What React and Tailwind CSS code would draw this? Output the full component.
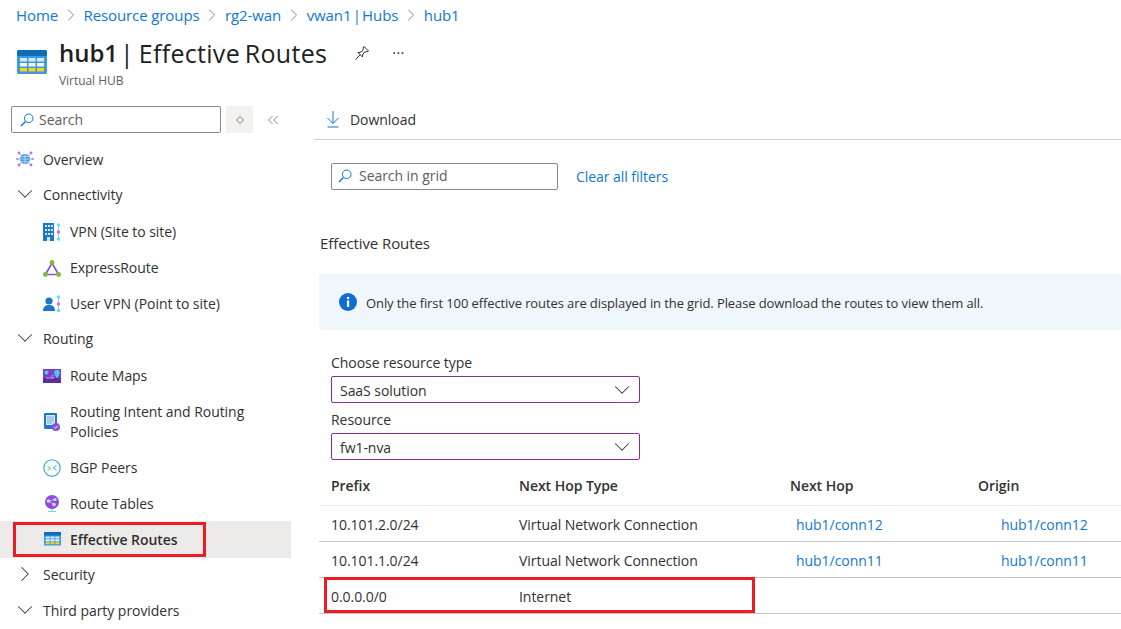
import { ChevronDown, ChevronRight, ChevronsLeft } from 'lucide-react'

const crumbs = ['Home', 'Resource groups', 'rg2-wan', 'vwan1 | Hubs', 'hub1']

function TableIcon({ size = 16 }) {
  return (
    <svg width={size} height={size * 0.8} viewBox="0 0 30 24">
      <rect x="0" y="0" width="30" height="24" rx="1.5" fill="#3b9be0" />
      <rect x="0" y="0" width="30" height="6" rx="1.5" fill="#0f6cbd" />
      <rect x="3" y="8" width="7" height="3.5" fill="#dbe9f6" />
      <rect x="11.5" y="8" width="7" height="3.5" fill="#dbe9f6" />
      <rect x="20" y="8" width="7" height="3.5" fill="#dbe9f6" />
      <rect x="3" y="13" width="7" height="3.5" fill="#f4f4f4" />
      <rect x="11.5" y="13" width="7" height="3.5" fill="#f4f4f4" />
      <rect x="20" y="13" width="7" height="3.5" fill="#f4f4f4" />
      <rect x="3" y="18" width="7" height="3.5" fill="#fcd116" />
      <rect x="11.5" y="18" width="7" height="3.5" fill="#fcd116" />
      <rect x="20" y="18" width="7" height="3.5" fill="#fcd116" />
    </svg>
  )
}

function SearchIcon() {
  return (
    <svg width="14" height="14" viewBox="0 0 14 14" fill="none" stroke="#0f78d4" strokeWidth="1">
      <circle cx="8.7" cy="5.3" r="4.3" />
      <path d="M5.5 8.5 L1 13" strokeWidth="1.4" />
    </svg>
  )
}

function OverviewIcon() {
  return (
    <svg width="18" height="18" viewBox="0 0 18 18">
      <g stroke="#b79ae8" strokeWidth="1">
        <path d="M3 3 L15 15 M15 3 L3 15 M1 9 H17" />
      </g>
      <circle cx="3" cy="3" r="1.4" fill="#a67af4" />
      <circle cx="15" cy="3" r="1.4" fill="#a67af4" />
      <circle cx="3" cy="15" r="1.4" fill="#a67af4" />
      <circle cx="15" cy="15" r="1.4" fill="#a67af4" />
      <circle cx="1.2" cy="9" r="1.1" fill="#a67af4" />
      <circle cx="16.8" cy="9" r="1.1" fill="#a67af4" />
      <circle cx="9" cy="9" r="5" fill="#3b9be0" />
      <path d="M4 9 H14 M9 4 V14 M5 6.5 H13 M5 11.5 H13" stroke="#d5eaf9" strokeWidth="0.7" />
    </svg>
  )
}

function VpnIcon() {
  return (
    <svg width="18" height="18" viewBox="0 0 18 18">
      <rect x="0" y="0" width="11" height="18" fill="#1b78c9" />
      <g fill="#d5e7f6">
        <rect x="2" y="2" width="2" height="2" />
        <rect x="5" y="2" width="2" height="2" />
        <rect x="8" y="2" width="2" height="2" />
        <rect x="2" y="6" width="2" height="2" />
        <rect x="5" y="6" width="2" height="2" />
        <rect x="8" y="6" width="2" height="2" />
        <rect x="2" y="10" width="2" height="2" />
        <rect x="5" y="10" width="2" height="2" />
        <rect x="8" y="10" width="2" height="2" />
        <rect x="4" y="14" width="3" height="4" />
      </g>
      <path d="M15.5 2 V16" stroke="#c6b3ec" strokeWidth="1" />
      <circle cx="15.5" cy="2" r="1.7" fill="#50e6ff" />
      <circle cx="15.5" cy="9" r="1.7" fill="#a67af4" />
      <circle cx="15.5" cy="16" r="1.7" fill="#50e6ff" />
    </svg>
  )
}

function ExpressIcon() {
  return (
    <svg width="18" height="17" viewBox="0 0 18 17">
      <path d="M9 3 L15.5 14.5 H2.5 Z" fill="none" stroke="#8a4fd8" strokeWidth="1.6" />
      <circle cx="9" cy="2.5" r="2.4" fill="#7fba2c" />
      <circle cx="2.4" cy="14.5" r="2.4" fill="#7fba2c" />
      <circle cx="15.6" cy="14.5" r="2.4" fill="#7fba2c" />
    </svg>
  )
}

function UserVpnIcon() {
  return (
    <svg width="18" height="18" viewBox="0 0 18 18">
      <circle cx="6" cy="6" r="3.6" fill="#1b78c9" />
      <path d="M0 16 C0 11 3 10 6 10 C9 10 12 11 12 16 Z" fill="#1b78c9" />
      <path d="M15.5 1 V16" stroke="#c6b3ec" strokeWidth="1" />
      <circle cx="15.5" cy="2" r="1.7" fill="#50e6ff" />
      <circle cx="15.5" cy="9" r="1.7" fill="#a67af4" />
      <circle cx="15.5" cy="15.5" r="1.7" fill="#50e6ff" />
    </svg>
  )
}

function RouteMapsIcon() {
  return (
    <svg width="18" height="14" viewBox="0 0 18 14">
      <rect x="0" y="0" width="18" height="14" fill="#7b3fc8" />
      <rect x="0" y="9" width="18" height="5" fill="#5c2d9e" />
      <circle cx="3.5" cy="3.5" r="2" fill="#50c8f5" />
      <path d="M3 9 H11 M11 9 C8 9 8 6 11 6" fill="none" stroke="#c9b6ee" strokeWidth="0.8" />
      <path d="M14 1 a2.8 2.8 0 0 1 2.8 2.8 c0 2 -2.8 5.5 -2.8 5.5 s-2.8 -3.5 -2.8 -5.5 a2.8 2.8 0 0 1 2.8 -2.8z" fill="#50c8f5" />
    </svg>
  )
}

function IntentIcon() {
  return (
    <svg width="16" height="18" viewBox="0 0 16 18">
      <rect x="0" y="0" width="13" height="16" rx="1" fill="#1b78c9" />
      <rect x="2" y="2" width="9" height="10" fill="#dceaf7" />
      <path d="M3 4 H10 M3 6 H10 M3 8 H10 M3 10 H8" stroke="#5a9bd5" strokeWidth="0.8" />
      <circle cx="12" cy="14" r="4" fill="#8a4fd8" />
      <path d="M10.2 14 L11.5 15.3 L13.8 12.8" fill="none" stroke="#fff" strokeWidth="0.9" />
    </svg>
  )
}

function BgpIcon() {
  return (
    <svg width="18" height="18" viewBox="0 0 18 18" fill="none">
      <circle cx="9" cy="9" r="8.2" stroke="#3b9be0" strokeWidth="1.1" fill="#f4fafe" />
      <path d="M4.5 7.5 L7.8 9.5 L4.5 11.5" stroke="#7fba2c" strokeWidth="0.9" />
      <path d="M13.5 6.5 L10.2 8.8 L13.5 11" stroke="#3b9be0" strokeWidth="0.9" />
    </svg>
  )
}

function RouteTablesIcon() {
  return (
    <svg width="18" height="18" viewBox="0 0 18 18">
      <path d="M9 13 V17 M5 16.5 H13" stroke="#76d3f5" strokeWidth="1" />
      <circle cx="9" cy="7" r="7" fill="#8a4fd8" />
      <circle cx="5.5" cy="6" r="1.8" fill="#ded0f5" />
      <circle cx="12" cy="4.5" r="1.6" fill="#ded0f5" />
      <circle cx="11" cy="9.5" r="1.8" fill="#ded0f5" />
      <path d="M5.5 6 L12 4.5 M5.5 6 L11 9.5" stroke="#ded0f5" strokeWidth="0.7" />
    </svg>
  )
}

function NavItem({ icon, label }) {
  return (
    <div className="flex items-center h-[36px] pt-[2px] pl-[43px]">
      <span className="flex items-center justify-center w-[18px]">{icon}</span>
      <span className="ml-[9px] leading-[20px]">{label}</span>
    </div>
  )
}

function NavGroup({ label, open, bottom }) {
  const Chevron = open ? ChevronDown : ChevronRight
  return (
    <div className={`flex items-center h-[36px] pl-[12px] ${bottom ? 'pb-[4px]' : 'pb-[2px]'}`}>
      <Chevron size={26} strokeWidth={0.95} className="text-[#323130]" />
      <span className="ml-[5px]">{label}</span>
    </div>
  )
}

function Select({ value }) {
  return (
    <div className="flex items-center justify-between w-[309px] h-[27px] border border-[#8a2da5] rounded-[2px] pl-[8px] pr-[4px] leading-none">
      <span className="pt-[3px]">{value}</span>
      <ChevronDown size={26} strokeWidth={0.95} className="text-[#323130]" />
    </div>
  )
}

const rows = [
  { prefix: '10.101.2.0/24', type: 'Virtual Network Connection', hop: 'hub1/conn12', origin: 'hub1/conn12' },
  { prefix: '10.101.1.0/24', type: 'Virtual Network Connection', hop: 'hub1/conn11', origin: 'hub1/conn11' },
  { prefix: '0.0.0.0/0', type: 'Internet', hop: '', origin: '' },
]

export default function App() {
  return (
    <div className="w-[1121px] h-[629px] overflow-hidden bg-white text-[#323130] text-[14px] font-['Open_Sans','Noto_Sans',sans-serif] tracking-[-0.05px]">
      {/* Breadcrumb */}
      <div className="flex items-center h-[32px] pb-[2px] pl-[16px] text-[#0f78d4] text-[15px] tracking-[-0.1px]">
        {crumbs.map((c, i) => (
          <span key={c} className="flex items-center">
            {i > 0 && <ChevronRight size={20} strokeWidth={0.9} className="mx-[2.75px] text-[#605e5c]" />}
            <span className={c.includes('|') ? '[word-spacing:-2.5px]' : ''}>{c}</span>
          </span>
        ))}
      </div>

      {/* Title */}
      <div className="flex h-[66px] pl-[17px]">
        <div className="pt-[18px]"><TableIcon size={30} /></div>
        <div className="ml-[12px]">
          <div className="flex items-center h-[42px] text-[24px] text-[#201f1e] leading-none">
            <span className="font-semibold">hub1</span>
            <span className="ml-[2px] text-[25px] tracking-[0.3px] [word-spacing:-2px]">| Effective Routes</span>
            <svg className="ml-[27px]" width="16" height="16" viewBox="0 0 16 16" fill="none" stroke="#323130" strokeWidth="1">
              <path d="M10 1.5 L14.5 6 L13 6.8 L10.5 7 L8.5 10 L8.5 12 L4 7.5 L6 7.5 L9 5.5 L9.2 3 Z M6 10 L1.5 14.5" />
            </svg>
            <span className="ml-[22px] text-[14px] tracking-[0.5px]">···</span>
          </div>
          <div className="text-[12px] leading-[16px] text-[#605e5c] -mt-[1px]">Virtual HUB</div>
        </div>
      </div>

      <div className="flex">
        {/* Sidebar */}
        <div className="w-[291px] shrink-0">
          <div className="flex items-center h-[27px] ml-[11px] mt-[8px]">
            <div className="flex items-center w-[210px] h-[27px] border border-[#8a8886] rounded-[2px] pl-[8px] text-[#605e5c]">
              <SearchIcon />
              <span className="ml-[5px]">Search</span>
            </div>
            <div className="flex items-center justify-center w-[27px] h-[27px] ml-[5px] bg-[#f3f2f1]">
              <svg width="8" height="8" viewBox="0 0 8 8" fill="none" stroke="#605e5c" strokeWidth="0.8">
                <path d="M4 0.5 L7.5 4 L4 7.5 L0.5 4 Z" />
              </svg>
            </div>
            <ChevronsLeft size={18} strokeWidth={0.95} className="ml-[11px] text-[#605e5c]" />
          </div>
          <div className="mt-[9px]">
            <div className="flex items-center h-[35px] pb-[1px] pl-[16px]">
              <OverviewIcon />
              <span className="ml-[9px]">Overview</span>
            </div>
            <NavGroup label="Connectivity" open />
            <NavItem icon={<VpnIcon />} label="VPN (Site to site)" />
            <NavItem icon={<ExpressIcon />} label="ExpressRoute" />
            <NavItem icon={<UserVpnIcon />} label="User VPN (Point to site)" />
            <NavGroup label="Routing" open />
            <NavItem icon={<RouteMapsIcon />} label="Route Maps" />
            <div className="flex items-center h-[56px] pt-[2px] pl-[43px] leading-[20px]">
              <span className="flex items-center justify-center w-[18px]"><IntentIcon /></span>
              <span className="ml-[9px]">Routing Intent and Routing<br />Policies</span>
            </div>
            <NavItem icon={<BgpIcon />} label="BGP Peers" />
            <NavItem icon={<RouteTablesIcon />} label="Route Tables" />
            <div className="relative flex items-center h-[37px] pb-[1px] pl-[43px] bg-[#edebe9]">
              <span className="flex items-center justify-center w-[18px]"><TableIcon size={17} /></span>
              <span className="ml-[9px] font-semibold">Effective Routes</span>
              <span className="absolute left-[13px] top-[1px] w-[193px] h-[35px] border-[3px] border-[#ed1c24]" />
            </div>
            <NavGroup label="Security" bottom />
            <NavGroup label="Third party providers" open bottom />
          </div>
        </div>

        {/* Content */}
        <div className="flex-1 min-w-0 pl-[23px]">
          <div className="flex items-center h-[42px] pt-[1px] border-b border-[#d2d0ce] pl-[12px]">
            <svg width="14" height="18" viewBox="0 0 14 18" fill="none" stroke="#0f78d4" strokeWidth="1">
              <path d="M7 1 V13 M1.5 8 L7 13.5 L12.5 8 M1.5 17 H12.5" />
            </svg>
            <span className="ml-[10px]">Download</span>
          </div>
          <div className="pl-[5px]">
            <div className="flex items-center mt-[23px] ml-[12px]">
              <div className="flex items-center w-[227px] h-[27px] pb-[2px] border border-[#8a8886] rounded-[2px] pl-[6px] text-[#605e5c]">
                <SearchIcon />
                <span className="ml-[7px]">Search in grid</span>
              </div>
              <span className="ml-[18px] text-[#0f78d4]">Clear all filters</span>
            </div>
            <div className="mt-[43px] ml-[1px] leading-[20px] text-[15px] tracking-[-0.1px]">Effective Routes</div>
            <div className="flex items-center h-[56px] mt-[21px] bg-[#eff6fc] rounded-[2px] pl-[20px] text-[13px] tracking-[-0.1px]">
              <svg width="18" height="18" viewBox="0 0 18 18">
                <circle cx="9" cy="9" r="9" fill="#0f6cd4" />
                <rect x="8" y="7.5" width="2.2" height="6.5" fill="#fff" />
                <circle cx="9.1" cy="5" r="1.3" fill="#fff" />
              </svg>
              <span className="ml-[9px] pt-[4px]">Only the first 100 effective routes are displayed in the grid. Please download the routes to view them all.</span>
            </div>
            <div className="pl-[12px] mt-[23px]">
              <div className="leading-[20px] h-[23px]">Choose resource type</div>
              <Select value="SaaS solution" />
              <div className="leading-[20px] h-[30px] pt-[7px]">Resource</div>
              <Select value="fw1-nva" />
            </div>

            {/* Grid */}
            <div className="grid grid-cols-[200px_271px_188px_1fr] mt-[7px]">
              <div className="h-[39px] pb-[2px] pl-[12px] flex items-center font-semibold border-b border-[#edebe9]">Prefix</div>
              <div className="h-[39px] pb-[2px] flex items-center font-semibold border-b border-[#edebe9]">Next Hop Type</div>
              <div className="h-[39px] pb-[2px] flex items-center font-semibold border-b border-[#edebe9]">Next Hop</div>
              <div className="h-[39px] pb-[2px] flex items-center font-semibold border-b border-[#edebe9]">Origin</div>
              {rows.map(r => (
                <div key={r.prefix} className="contents">
                  <div className="relative h-[36px] pt-[1px] pl-[12px] flex items-center border-b border-[#c8c6c4]">
                    {r.prefix}
                    {r.prefix === '0.0.0.0/0' && <span className="absolute left-[5px] -top-[1px] w-[431px] h-[36px] border-[3px] border-[#ed1c24]" />}
                  </div>
                  <div className="h-[36px] pt-[1px] flex items-center border-b border-[#c8c6c4]">{r.type}</div>
                  <div className="h-[36px] pt-[1px] pl-[6px] flex items-center border-b border-[#c8c6c4] text-[#0f78d4]">{r.hop}</div>
                  <div className="h-[36px] pt-[1px] pl-[23px] flex items-center border-b border-[#c8c6c4] text-[#0f78d4]">{r.origin}</div>
                </div>
              ))}
            </div>
          </div>
        </div>
      </div>
    </div>
  )
}
